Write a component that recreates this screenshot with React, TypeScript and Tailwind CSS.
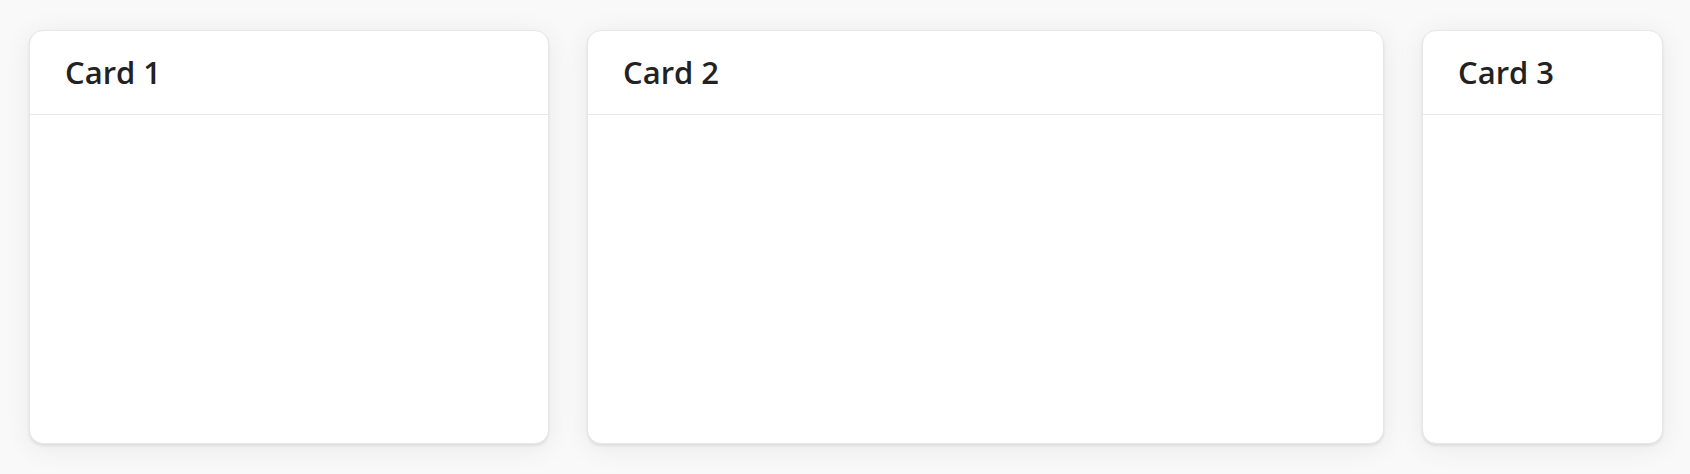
import React from 'react';

const cards = [
  { title: 'Card 1', width: 'w-[520px]' },
  { title: 'Card 2', width: 'w-[797px]' },
  { title: 'Card 3', width: 'w-[241px]' },
];

export default function App() {
  return (
    <div
      className="w-[1690px] h-[474px] bg-[#f9f9f9] flex gap-[38px] pl-[29px] pt-[30px]"
      style={{ fontFamily: '"Open Sans", "Noto Sans", sans-serif' }}
    >
      {cards.map((card) => (
        <div
          key={card.title}
          className={`${card.width} h-[414px] shrink-0 bg-white border border-[#e6e6e6] rounded-[14px] shadow-[0_2px_3px_rgba(0,0,0,0.08),0_4px_28px_rgba(0,0,0,0.07)] flex flex-col overflow-hidden`}
        >
          <div className="h-[84px] shrink-0 flex items-center px-[35px] border-b border-[#e8e8e8]">
            <h2 className="text-[31px] font-semibold text-[#222222] leading-none">{card.title}</h2>
          </div>
          <div className="flex-1" />
        </div>
      ))}
    </div>
  );
}
